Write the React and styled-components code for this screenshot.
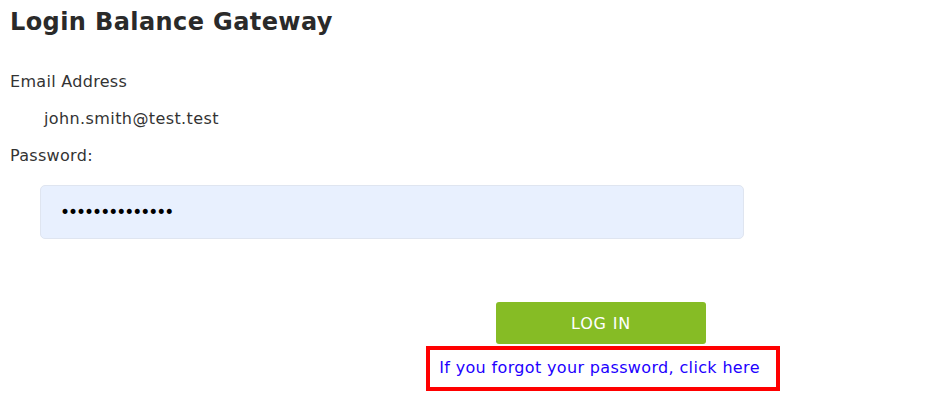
import React from "react";
import styled, { createGlobalStyle } from "styled-components";

const Global = createGlobalStyle`
  body {
    margin: 0;
    background: #fff;
    font-family: "DejaVu Sans", Verdana, sans-serif;
    color: #333;
  }
`;

const Page = styled.div`
  padding: 8px 10px;
  width: 931px;
  box-sizing: border-box;
`;

const Title = styled.h1`
  margin: 0;
  font-size: 24px;
  font-weight: bold;
  color: #2a2a2a;
  letter-spacing: 0.4px;
  line-height: 28px;
`;

const Label = styled.div`
  margin-top: ${(p) => p.top || 0}px;
  font-size: 16px;
  letter-spacing: 0.3px;
  line-height: 20px;
  color: #333;
`;

const Value = styled.div`
  margin-top: 17px;
  padding-left: 34px;
  font-size: 16px;
  letter-spacing: 0.4px;
  line-height: 20px;
  color: #333;
`;

const Input = styled.input`
  display: block;
  margin: 19px 0 0 30px;
  width: 704px;
  height: 54px;
  box-sizing: border-box;
  padding: 0 19px;
  border: 1px solid #dfe5f0;
  border-radius: 5px;
  background: #e8f0fe;
  font-family: "DejaVu Sans", Verdana, sans-serif;
  font-size: 17px;
  color: #000;
  letter-spacing: -2px;
  outline: none;
`;

const Actions = styled.div`
  display: flex;
  flex-direction: column;
  align-items: center;
  width: 420px;
  margin-top: 63px;
  margin-left: 381px;
`;

const Button = styled.button`
  width: 210px;
  height: 42px;
  border: none;
  border-radius: 3px;
  background: #86bc25;
  color: #fff;
  font-family: "DejaVu Sans", Verdana, sans-serif;
  font-size: 16px;
  letter-spacing: 0.8px;
`;

const ForgotBox = styled.div`
  margin: 2px 0 0 4px;
  border: 4px solid #ff0000;
  padding: 7px 16px 8px 9px;
`;

const ForgotLink = styled.a`
  color: #2200ff;
  font-size: 16px;
  letter-spacing: 0.35px;
  line-height: 22px;
  text-decoration: none;
`;

export default function App() {
  return (
    <>
      <Global />
      <Page>
        <Title>Login Balance Gateway</Title>
        <Label top={36}>Email Address</Label>
        <Value>john.smith@test.test</Value>
        <Label top={17}>Password:</Label>
        <Input type="password" defaultValue="abcdefghijklmn" />
        <Actions>
          <Button>LOG IN</Button>
          <ForgotBox>
            <ForgotLink href="#">If you forgot your password, click here</ForgotLink>
          </ForgotBox>
        </Actions>
      </Page>
    </>
  );
}
